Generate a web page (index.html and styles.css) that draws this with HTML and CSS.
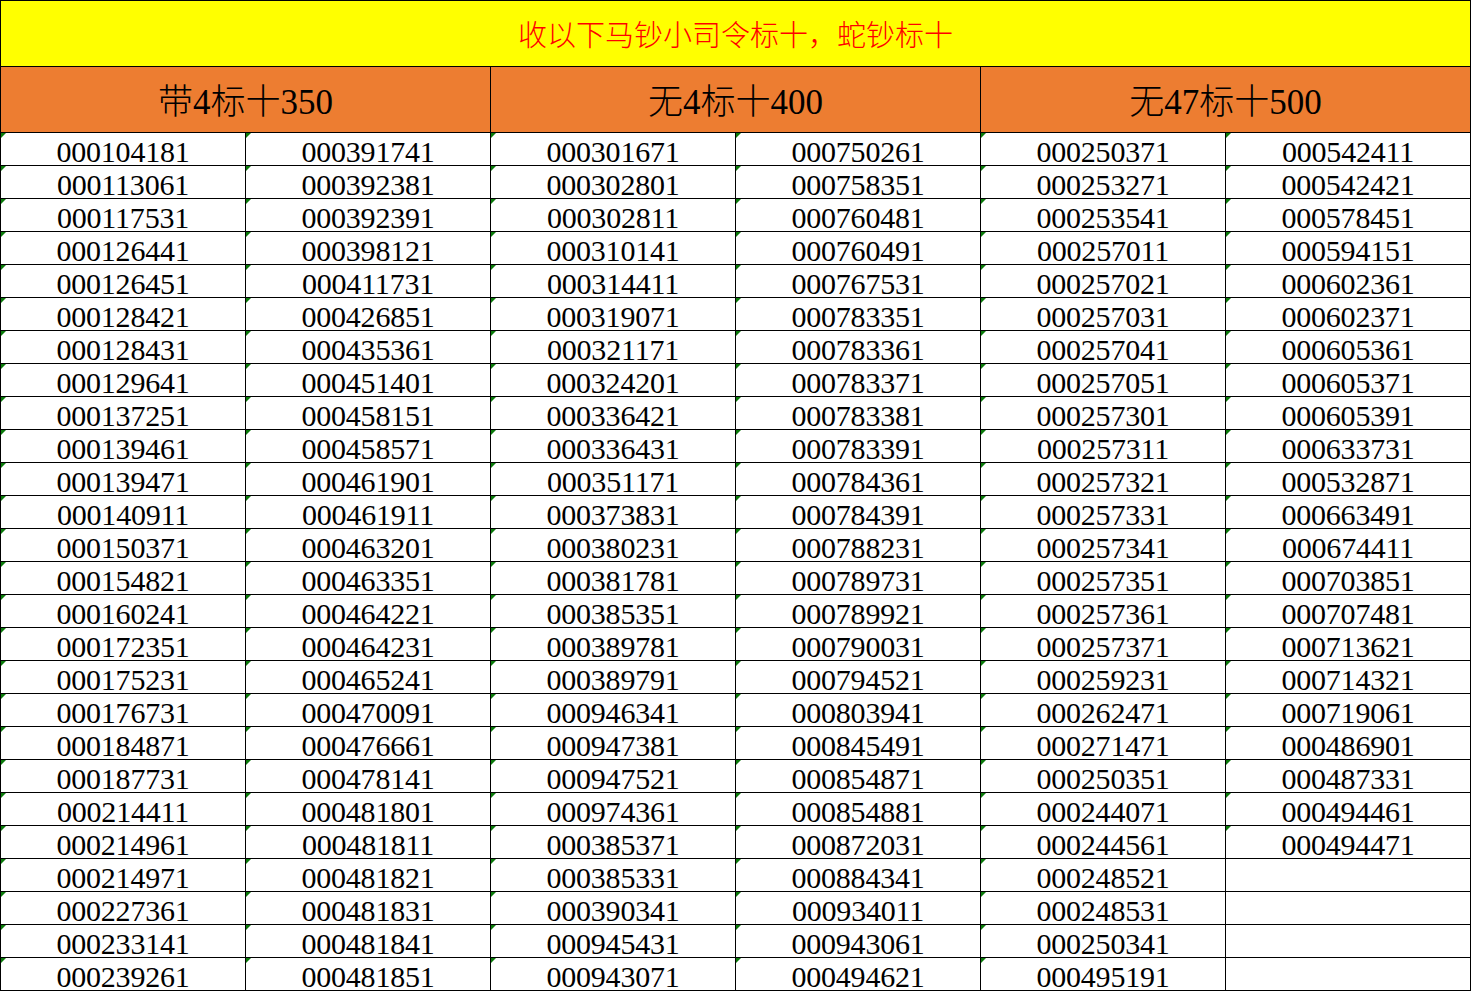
FILE: index.html
```html
<!DOCTYPE html>
<html lang="zh-CN">
<head>
<meta charset="utf-8">
<title>收以下马钞小司令标十</title>
<link rel="stylesheet" href="styles.css">
</head>
<body>
<div class="sheet">
  <div class="title">收以下马钞小司令标十，蛇钞标十</div>
  <div class="head"><span class="cjk">带</span>4<span class="cjk">标十</span>350</div>
  <div class="head"><span class="cjk">无</span>4<span class="cjk">标十</span>400</div>
  <div class="head"><span class="cjk">无</span>47<span class="cjk">标十</span>500</div>

  <div class="c n">000104181</div><div class="c n">000391741</div><div class="c n">000301671</div><div class="c n">000750261</div><div class="c n">000250371</div><div class="c n">000542411</div>
  <div class="c n">000113061</div><div class="c n">000392381</div><div class="c n">000302801</div><div class="c n">000758351</div><div class="c n">000253271</div><div class="c n">000542421</div>
  <div class="c n">000117531</div><div class="c n">000392391</div><div class="c n">000302811</div><div class="c n">000760481</div><div class="c n">000253541</div><div class="c n">000578451</div>
  <div class="c n">000126441</div><div class="c n">000398121</div><div class="c n">000310141</div><div class="c n">000760491</div><div class="c n">000257011</div><div class="c n">000594151</div>
  <div class="c n">000126451</div><div class="c n">000411731</div><div class="c n">000314411</div><div class="c n">000767531</div><div class="c n">000257021</div><div class="c n">000602361</div>
  <div class="c n">000128421</div><div class="c n">000426851</div><div class="c n">000319071</div><div class="c n">000783351</div><div class="c n">000257031</div><div class="c n">000602371</div>
  <div class="c n">000128431</div><div class="c n">000435361</div><div class="c n">000321171</div><div class="c n">000783361</div><div class="c n">000257041</div><div class="c n">000605361</div>
  <div class="c n">000129641</div><div class="c n">000451401</div><div class="c n">000324201</div><div class="c n">000783371</div><div class="c n">000257051</div><div class="c n">000605371</div>
  <div class="c n">000137251</div><div class="c n">000458151</div><div class="c n">000336421</div><div class="c n">000783381</div><div class="c n">000257301</div><div class="c n">000605391</div>
  <div class="c n">000139461</div><div class="c n">000458571</div><div class="c n">000336431</div><div class="c n">000783391</div><div class="c n">000257311</div><div class="c n">000633731</div>
  <div class="c n">000139471</div><div class="c n">000461901</div><div class="c n">000351171</div><div class="c n">000784361</div><div class="c n">000257321</div><div class="c n">000532871</div>
  <div class="c n">000140911</div><div class="c n">000461911</div><div class="c n">000373831</div><div class="c n">000784391</div><div class="c n">000257331</div><div class="c n">000663491</div>
  <div class="c n">000150371</div><div class="c n">000463201</div><div class="c n">000380231</div><div class="c n">000788231</div><div class="c n">000257341</div><div class="c n">000674411</div>
  <div class="c n">000154821</div><div class="c n">000463351</div><div class="c n">000381781</div><div class="c n">000789731</div><div class="c n">000257351</div><div class="c n">000703851</div>
  <div class="c n">000160241</div><div class="c n">000464221</div><div class="c n">000385351</div><div class="c n">000789921</div><div class="c n">000257361</div><div class="c n">000707481</div>
  <div class="c n">000172351</div><div class="c n">000464231</div><div class="c n">000389781</div><div class="c n">000790031</div><div class="c n">000257371</div><div class="c n">000713621</div>
  <div class="c n">000175231</div><div class="c n">000465241</div><div class="c n">000389791</div><div class="c n">000794521</div><div class="c n">000259231</div><div class="c n">000714321</div>
  <div class="c n">000176731</div><div class="c n">000470091</div><div class="c n">000946341</div><div class="c n">000803941</div><div class="c n">000262471</div><div class="c n">000719061</div>
  <div class="c n">000184871</div><div class="c n">000476661</div><div class="c n">000947381</div><div class="c n">000845491</div><div class="c n">000271471</div><div class="c n">000486901</div>
  <div class="c n">000187731</div><div class="c n">000478141</div><div class="c n">000947521</div><div class="c n">000854871</div><div class="c n">000250351</div><div class="c n">000487331</div>
  <div class="c n">000214411</div><div class="c n">000481801</div><div class="c n">000974361</div><div class="c n">000854881</div><div class="c n">000244071</div><div class="c n">000494461</div>
  <div class="c n">000214961</div><div class="c n">000481811</div><div class="c n">000385371</div><div class="c n">000872031</div><div class="c n">000244561</div><div class="c n">000494471</div>
  <div class="c n">000214971</div><div class="c n">000481821</div><div class="c n">000385331</div><div class="c n">000884341</div><div class="c n">000248521</div><div class="c"></div>
  <div class="c n">000227361</div><div class="c n">000481831</div><div class="c n">000390341</div><div class="c n">000934011</div><div class="c n">000248531</div><div class="c"></div>
  <div class="c n">000233141</div><div class="c n">000481841</div><div class="c n">000945431</div><div class="c n">000943061</div><div class="c n">000250341</div><div class="c"></div>
  <div class="c n">000239261</div><div class="c n">000481851</div><div class="c n">000943071</div><div class="c n">000494621</div><div class="c n">000495191</div><div class="c"></div>
</div>
</body>
</html>
```

FILE: styles.css
```css
* {
  box-sizing: border-box;
}

html, body {
  margin: 0;
  padding: 0;
  background: #ffffff;
}

body {
  overflow: hidden;
  font-family: "Liberation Serif", "Noto Sans CJK SC", serif;
  color: #000000;
}

.sheet {
  display: grid;
  width: 1471px;
  grid-template-columns: repeat(6, 245px);
  grid-template-rows: 66px 66px;
  grid-auto-rows: 33px;
  border-left: 1px solid #000;
  border-top: 1px solid #000;
}

.title,
.head,
.c {
  border-right: 1px solid #000;
  border-bottom: 1px solid #000;
}

.title {
  grid-column: 1 / -1;
  background: #ffff00;
  color: #ff0000;
  font-family: "Noto Sans CJK SC", sans-serif;
  font-weight: 300;
  font-size: 29px;
  line-height: 30px;
  text-align: center;
  padding-top: 17px;
}

.head {
  grid-column: span 2;
  background: #ed7d31;
  font-family: "Liberation Serif", serif;
  font-weight: 400;
  font-size: 35px;
  line-height: 40px;
  text-align: center;
  padding-top: 12px;
}

.cjk {
  font-family: "Noto Sans CJK SC", sans-serif;
  font-weight: 300;
}

.c {
  position: relative;
  font-size: 30px;
  letter-spacing: -0.2px;
  line-height: 30px;
  padding-top: 4px;
  text-align: center;
  white-space: nowrap;
}

.n::before {
  content: "";
  position: absolute;
  left: 0;
  top: 0;
  width: 0;
  height: 0;
  border-top: 5px solid #0a7a0a;
  border-right: 5px solid transparent;
}
```
